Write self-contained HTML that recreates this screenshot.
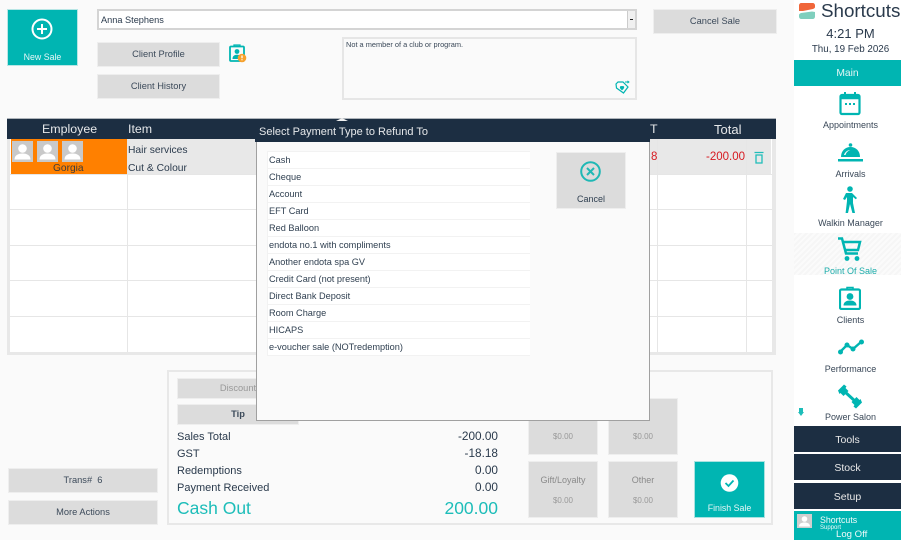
<!DOCTYPE html>
<html><head><meta charset="utf-8"><title>Shortcuts POS</title>
<style>
html,body{margin:0;padding:0;background:#fafafa}
#p{position:relative;width:901px;height:540px;overflow:hidden;background:#fafafa;font-family:"Liberation Sans",sans-serif;color:#2a3a4c;filter:blur(.3px)}
#p div,#p svg{position:absolute;box-sizing:border-box}
.b{background:#dcdcdc;border:1px solid #eee;text-align:center;font-size:9.3px;color:#3c4a5a}
.t{white-space:nowrap}
.r{height:16px;left:268px;width:262px;background:#fff;font-size:9.2px;line-height:17px;padding-left:1px;color:#2f3f50}
.h{left:794px;width:107px;height:26px;background:#1c2e42;color:#e8e8e8;text-align:center;font-size:10.5px;line-height:28px}
.m{left:794px;width:107px;text-align:center;font-size:9px;color:#3a4858;white-space:nowrap}
.l{left:177px;font-size:11px;color:#2a3a4c;white-space:nowrap}
.v{right:403px;font-size:11.8px;color:#2a3a4c;white-space:nowrap}
.tile{width:70px;height:57px;background:#dcdcdc;border:1px solid #eee;text-align:center;color:#8a8a8a}
.hl{background:#e8e8e8}
</style></head><body><div id="p">

<!-- New Sale -->
<div style="left:7px;top:9px;width:71px;height:57px;background:#00b5b2;border:1px solid #b8e6e5"></div>
<svg style="left:31px;top:18px" width="22" height="22" viewBox="0 0 22 22" fill="none" stroke="#fff" stroke-width="2"><circle cx="11" cy="11" r="9.5"/><path d="M11 6v10M6 11h10"/></svg>
<div class="t" style="left:7px;width:71px;top:52px;text-align:center;font-size:8.8px;color:#e4f6f6">New Sale</div>

<!-- Combo -->
<div style="left:97px;top:9px;width:540px;height:21px;background:#fff;border:2px solid #d4d4d4"></div>
<div class="t" style="left:101px;top:15px;font-size:9.2px;color:#2a3a4c">Anna Stephens</div>
<div style="left:627px;top:11px;width:8px;height:17px;background:#f0f0f0;border-left:1px solid #ccc"></div>
<div style="left:630px;top:19px;width:3px;height:1px;background:#222"></div>

<div class="b" style="left:97px;top:42px;width:123px;height:25px;line-height:23px">Client Profile</div>
<div class="b" style="left:97px;top:74px;width:123px;height:25px;line-height:23px">Client History</div>

<!-- client warn icon -->
<svg style="left:228px;top:43px" width="20" height="21" viewBox="0 0 20 21" fill="none"><rect x="2" y="3.500" width="14" height="14.500" rx="1" stroke="#00b5b2" stroke-width="1.800"/><path d="M6 3.500V2h6v1.500" stroke="#00b5b2" stroke-width="1.300"/><circle cx="9" cy="8.500" r="2.400" fill="#00b5b2"/><path d="M4.500 16c0-3 2-4.200 4.500-4.200s4.500 1.200 4.500 4.200z" fill="#00b5b2"/><circle cx="14" cy="15" r="4.300" fill="#f7a12c"/><path d="M14 12.500v2.700M14 16.300v1" stroke="#fff" stroke-width="1.300"/></svg>

<!-- Note box -->
<div style="left:342px;top:37px;width:295px;height:63px;background:#fafafa;border:2px solid #e6e6e6"></div>
<div class="t" style="left:346px;top:40px;font-size:7.4px;color:#3a4858">Not a member of a club or program.</div>
<svg style="left:615px;top:80px" width="15" height="15" viewBox="0 0 15 15" fill="none" stroke="#00b5b2" stroke-width="1.200"><path d="M1 4l2-2h5l5 5-4.500 6L1.500 8z"/><path d="M7 9.500c-2-1.500-1.800-2.700-.8-2.900.5 0 .8.300 .8.600 0-.3.400-.6.900-.6 1 .2 1.100 1.400-.9 2.900z" fill="#00b5b2"/><path d="M10 2h4M12.500 .8L14 2l-1.500 1.200" stroke-width=".9"/></svg>

<div class="b" style="left:653px;top:9px;width:124px;height:25px;line-height:23px">Cancel Sale</div>

<!-- Table -->
<div style="left:7px;top:139px;width:769px;height:216px;background:#e8e8e8"></div>
<div style="left:10px;top:139px;width:762px;height:213px;background:#fff"></div>
<div style="left:7px;top:118px;width:769px;height:21px;background:#1c2e42;border-top:1px solid #aeb4ba"></div>
<div class="t" style="left:42px;top:122px;font-size:12.400px;color:#e6e8ea">Employee</div>
<div class="t" style="left:128px;top:122px;font-size:12.400px;color:#e6e8ea">Item</div>
<div class="t" style="left:714px;top:122px;font-size:13px;color:#e6e8ea">Total</div>
<div class="t" style="left:650px;top:122px;font-size:12.400px;color:#e6e8ea">T</div>
<div class="hl" style="left:128px;top:139px;width:643px;height:35px"></div>
<div style="left:11px;top:139px;width:117px;height:35px;background:#ff8000"></div>
<div style="left:10px;top:174px;width:762px;height:1px;background:#e6e6e6"></div>
<div style="left:10px;top:209px;width:762px;height:1px;background:#e6e6e6"></div>
<div style="left:10px;top:245px;width:762px;height:1px;background:#e6e6e6"></div>
<div style="left:10px;top:280px;width:762px;height:1px;background:#e6e6e6"></div>
<div style="left:10px;top:316px;width:762px;height:1px;background:#e6e6e6"></div>
<div style="left:127px;top:139px;width:1px;height:213px;background:#e6e6e6"></div>
<div style="left:657px;top:139px;width:1px;height:213px;background:#e6e6e6"></div>
<div style="left:746px;top:139px;width:1px;height:213px;background:#e6e6e6"></div>
<svg style="left:12px;top:141px" width="72" height="22" viewBox="0 0 72 22"><g><rect width="21" height="21" fill="#c9c9c9"/><circle cx="10.500" cy="7.500" r="4.300" fill="#fff"/><path d="M2.500 18.500c0-4.500 4-6 8-6s8 1.500 8 6z" fill="#fff"/></g><g transform="translate(25 0)"><rect width="21" height="21" fill="#c9c9c9"/><circle cx="10.500" cy="7.500" r="4.300" fill="#fff"/><path d="M2.500 18.500c0-4.500 4-6 8-6s8 1.500 8 6z" fill="#fff"/></g><g transform="translate(50 0)"><rect width="21" height="21" fill="#c9c9c9"/><circle cx="10.500" cy="7.500" r="4.300" fill="#fff"/><path d="M2.500 18.500c0-4.500 4-6 8-6s8 1.500 8 6z" fill="#fff"/></g></svg>
<div class="t" style="left:53px;top:163px;font-size:10.200px;color:#3c3c3c">Gorgia</div>
<div class="t" style="left:128px;top:145px;font-size:10.300px">Hair services</div>
<div class="t" style="left:128px;top:163px;font-size:10.300px">Cut &amp; Colour</div>
<div class="t" style="right:156px;top:151px;font-size:11.500px;color:#d71920">-200.00</div>
<div class="t" style="left:651px;top:151px;font-size:11.500px;color:#d71920">8</div>
<svg style="left:753px;top:151px" width="12" height="13" viewBox="0 0 12 13" fill="none" stroke="#1fbdb9" stroke-width="1.300"><path d="M1.500 1.500h9M3 4h6v8H3z"/></svg>

<!-- Bottom panel -->
<div style="left:167px;top:370px;width:606px;height:155px;border:2px solid #e8e8e8"></div>
<div class="b" style="left:177px;top:378px;width:122px;height:21px;line-height:19px;color:#999">Discount</div>
<div class="b" style="left:177px;top:404px;width:122px;height:21px;line-height:19px;font-weight:bold">Tip</div>
<div class="l" style="top:431px">Sales Total</div>
<div class="l" style="top:448px">GST</div>
<div class="l" style="top:465px">Redemptions</div>
<div class="l" style="top:482px">Payment Received</div>
<div class="l" style="top:498px;font-size:17.500px;color:#1dbdb9">Cash Out</div>
<div class="v" style="top:429px">-200.00</div>
<div class="v" style="top:446px">-18.18</div>
<div class="v" style="top:463px">0.00</div>
<div class="v" style="top:480px">0.00</div>
<div class="v" style="top:498px;font-size:17.500px;color:#1dbdb9">200.00</div>

<div class="tile" style="left:528px;top:398px"></div>
<div class="tile" style="left:608px;top:398px"></div>
<div class="tile" style="left:528px;top:461px"></div>
<div class="tile" style="left:608px;top:461px"></div>
<div class="t" style="left:528px;width:70px;top:432px;text-align:center;font-size:8px;color:#999">$0.00</div>
<div class="t" style="left:608px;width:70px;top:432px;text-align:center;font-size:8px;color:#999">$0.00</div>
<div class="t" style="left:528px;width:70px;top:496px;text-align:center;font-size:8px;color:#999">$0.00</div>
<div class="t" style="left:608px;width:70px;top:496px;text-align:center;font-size:8px;color:#999">$0.00</div>
<div class="t" style="left:528px;width:70px;top:475px;text-align:center;font-size:9px;color:#8a8a8a">Gift/Loyalty</div>
<div class="t" style="left:608px;width:70px;top:475px;text-align:center;font-size:9px;color:#8a8a8a">Other</div>
<div style="left:694px;top:461px;width:71px;height:57px;background:#00b5b2;border:1px solid #a8e2e0"></div>
<svg style="left:720px;top:474px" width="19" height="18" viewBox="0 0 19 18"><circle cx="9.500" cy="9" r="8.800" fill="#fff"/><path d="M5.500 9l3 3 5-5.500" fill="none" stroke="#00b5b2" stroke-width="1.800"/></svg>
<div class="t" style="left:694px;width:71px;top:503px;text-align:center;font-size:8.800px;color:#e4f6f6">Finish Sale</div>

<div class="b" style="left:8px;top:468px;width:150px;height:25px;line-height:23px">Trans# &nbsp;6</div>
<div class="b" style="left:8px;top:500px;width:150px;height:25px;line-height:23px">More Actions</div>

<!-- Modal -->
<div style="left:256px;top:118px;width:394px;height:303px;background:#fafafa;border:1px solid #a0a0a0;border-top:0"></div>
<div style="left:255px;top:118px;width:395px;height:24px;background:#1c2e42;border-top:1px solid #aeb4ba"></div>
<div style="left:336px;top:118px;width:0;height:0;border-left:6px solid transparent;border-right:6px solid transparent;border-bottom:3px solid #f0f0f0"></div>
<div class="t" style="left:259px;top:126px;font-size:11px;color:#e6e8ea">Select Payment Type to Refund To</div>
<div style="left:267px;top:151px;width:263px;height:205px;background:#f2f2f2"></div>
<div class="r" style="top:152px">Cash</div>
<div class="r" style="top:169px">Cheque</div>
<div class="r" style="top:186px">Account</div>
<div class="r" style="top:203px">EFT Card</div>
<div class="r" style="top:220px">Red Balloon</div>
<div class="r" style="top:237px">endota no.1 with compliments</div>
<div class="r" style="top:254px">Another endota spa GV</div>
<div class="r" style="top:271px">Credit Card (not present)</div>
<div class="r" style="top:288px">Direct Bank Deposit</div>
<div class="r" style="top:305px">Room Charge</div>
<div class="r" style="top:322px">HICAPS</div>
<div class="r" style="top:339px">e-voucher sale (NOTredemption)</div>
<div style="left:556px;top:152px;width:70px;height:57px;background:#dcdcdc;border:1px solid #eee"></div>
<svg style="left:580px;top:161px" width="21" height="21" viewBox="0 0 21 21" fill="none" stroke="#1fb8b5" stroke-width="2"><circle cx="10.500" cy="10.500" r="9.300"/><path d="M7 7l7 7M14 7l-7 7"/></svg>
<div class="t" style="left:556px;width:70px;top:194px;text-align:center;font-size:9px;color:#2f3f50">Cancel</div>

<!-- Sidebar -->
<div style="left:794px;top:0;width:107px;height:540px;background:#fff"></div>
<svg style="left:798px;top:2px" width="18" height="18" viewBox="0 0 18 18"><path d="M1 9V3.500C1 2 2 1 3.500 1h11C16 1 17 2 17 3.500V5c0 1-1 1.500-2 2L5 9z" fill="#f0663a"/><path d="M17 10v4.500c0 1.500-1 2.500-2.500 2.500h-11C2 17 1 16 1 14.500V13c0-1 1-1.500 2-2l11-1.500z" fill="#7fcfbd"/></svg>
<div class="t" style="left:821px;top:0;font-size:18.800px;color:#2a3a4c">Shortcuts</div>
<div class="t" style="left:794px;width:113px;top:26px;text-align:center;font-size:13px;color:#2a3a4c">4:21 PM</div>
<div class="t" style="left:794px;width:113px;top:44px;text-align:center;font-size:9.800px;color:#2a3a4c">Thu, 19 Feb 2026</div>
<div style="left:794px;top:60px;width:107px;height:26px;background:#00b5b2;color:#e4f6f6;text-align:center;font-size:10.300px;line-height:27px">Main</div>

<svg style="left:839px;top:91px" width="22" height="25" viewBox="0 0 22 25" fill="none" stroke="#00b5b2" stroke-width="2.200"><rect x="1.500" y="4" width="19" height="19" rx="1.500"/><path d="M1.500 6.500h19" stroke-width="3.500"/><path d="M6 1v4M16 1v4" stroke-width="2"/><path d="M6 13h2M10 13h2M14 13h2" stroke-width="2"/></svg>
<div class="m" style="top:120px;left:797px">Appointments</div>

<svg style="left:838px;top:143px" width="25" height="20" viewBox="0 0 25 20" fill="#00b5b2"><circle cx="12.500" cy="2" r="1.800"/><path d="M3 14C3 8 7 4 12.500 4S22 8 22 14z"/><path d="M6 12c1-3 3.500-5 6.500-5 0 0-4 1-5 5z" fill="#fff"/><rect x="0" y="16" width="25" height="2.500"/></svg>
<div class="m" style="top:169px;left:797px">Arrivals</div>

<svg style="left:841px;top:186px" width="18" height="28" viewBox="0 0 18 28" fill="#00b5b2"><circle cx="9" cy="3" r="2.800"/><path d="M5 7h6l5 5-1.200 1.300L12 11v6l2 10h-2.600L9 18l-2 9H4.600L6 15v-4l-2 3-2-1 3-6z"/></svg>
<div class="m" style="top:218px;left:797px">Walkin Manager</div>

<div style="left:794px;top:233px;width:107px;height:42px;background:repeating-linear-gradient(135deg,#f6f6f6 0 2px,#fbfbfb 2px 4px)"></div>
<svg style="left:837px;top:237px" width="26" height="25" viewBox="0 0 26 25" fill="none" stroke="#00b5b2" stroke-width="2.500"><path d="M1 1.500h4l4 15h12"/><path d="M6.500 5h16.500l-2 8H8.500"/><circle cx="10" cy="21.500" r="2.400" fill="#00b5b2" stroke="none"/><circle cx="20" cy="21.500" r="2.400" fill="#00b5b2" stroke="none"/></svg>
<div class="m" style="top:266px;left:797px;color:#1dadab">Point Of Sale</div>

<svg style="left:839px;top:286px" width="22" height="24" viewBox="0 0 22 24" fill="none" stroke="#00b5b2" stroke-width="2.200"><rect x="1" y="3.500" width="20" height="19.500" rx="1.500"/><path d="M8 3.500V1.500h6v2" stroke-width="1.500"/><circle cx="11" cy="10.500" r="3.400" fill="#00b5b2" stroke="none"/><path d="M4.500 19.500c0-3.500 3-5 6.500-5s6.500 1.500 6.500 5z" fill="#00b5b2" stroke="none"/></svg>
<div class="m" style="top:315px;left:797px">Clients</div>

<svg style="left:838px;top:339px" width="26" height="16" viewBox="0 0 26 16" fill="none" stroke="#00b5b2" stroke-width="2.400"><path d="M2 13l7-7 6 4 8-7"/><g fill="#00b5b2" stroke="none"><circle cx="2.500" cy="13" r="2.500"/><circle cx="9" cy="6" r="2.500"/><circle cx="15" cy="10" r="2.500"/><circle cx="23.500" cy="3" r="2.500"/></g></svg>
<div class="m" style="top:364px;left:797px">Performance</div>

<svg style="left:837px;top:384px" width="26" height="25" viewBox="0 0 26 25" fill="#00b5b2"><path d="M7 7l12 11" stroke="#00b5b2" stroke-width="3"/><path d="M1 6.500L7 .5l2.500 2L8.500 4l3 3-5 5-3-3-1 1z"/><path d="M25 18.500L19 24.500l-2.500-2 1-1.500-3-3 5-5 3 3 1-1z"/></svg>
<div class="m" style="top:412px;left:797px">Power Salon</div>
<div style="left:799px;top:408px;width:4px;height:4px;background:#1dbdb9"></div>
<div style="left:798px;top:412px;width:0;height:0;border-left:3.500px solid transparent;border-right:3.500px solid transparent;border-top:4px solid #1dbdb9"></div>

<div class="h" style="top:426px">Tools</div>
<div class="h" style="top:454px">Stock</div>
<div class="h" style="top:483px">Setup</div>
<div style="left:794px;top:511px;width:107px;height:29px;background:#00b5b2"></div>
<svg style="left:797px;top:514px" width="15" height="14" viewBox="0 0 15 14"><rect width="15" height="14" fill="#cfcfcf"/><circle cx="7.500" cy="5" r="2.800" fill="#fff"/><path d="M2 12.500c0-3 2.500-4 5.500-4s5.500 1 5.500 4z" fill="#fff"/></svg>
<div class="t" style="left:820px;top:515px;font-size:8.800px;color:#f0fafa">Shortcuts</div>
<div class="t" style="left:820px;top:525px;font-size:6px;color:#f0fafa">Support</div>
<div class="t" style="left:836px;top:529px;font-size:9.600px;color:#f0fafa">Log Off</div>

</div></body></html>
